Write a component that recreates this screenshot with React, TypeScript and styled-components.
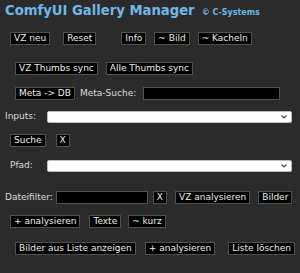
import React from "react";
import styled, { createGlobalStyle } from "styled-components";

const Global = createGlobalStyle`
  html, body { margin: 0; padding: 0; background: #2b2b2b; }
  body { font-family: "DejaVu Sans", Verdana, sans-serif; }
`;

const Panel = styled.div`
  width: 300px;
  height: 273px;
  box-sizing: border-box;
  padding-top: 3px;
  background: #2b2b2b;
  display: flex;
  flex-direction: column;
  overflow: hidden;
`;

const Title = styled.h1`
  margin: 0 0 0 5px;
  height: 16px;
  display: flex;
  align-items: baseline;
  gap: 7px;
  font: bold 13.2px/16px "DejaVu Sans", Verdana, sans-serif;
  color: #72b8e6;
  white-space: nowrap;
`;

const Copy = styled.span`
  font: bold 8px "DejaVu Sans", Verdana, sans-serif;
  color: #72b8e6;
`;

const Row = styled.div<{ $top: number; $left: number }>`
  display: flex;
  align-items: center;
  height: 13px;
  margin-top: ${(p) => p.$top}px;
  padding-left: ${(p) => p.$left}px;
  white-space: nowrap;
`;

const Button = styled.button<{ $ml?: number }>`
  box-sizing: border-box;
  height: 13px;
  margin: 0 0 0 ${(p) => p.$ml ?? 0}px;
  padding: 0 3px;
  background: #000;
  color: #eee;
  border: 1px solid #505050;
  border-radius: 0;
  font: 9px/11px "DejaVu Sans", Verdana, sans-serif;
  cursor: pointer;
`;

const Label = styled.span<{ $ml?: number; $w?: number }>`
  margin-left: ${(p) => p.$ml ?? 0}px;
  ${(p) => (p.$w ? `width: ${p.$w}px;` : "")}
  flex: none;
  font: 9px/11px "DejaVu Sans", Verdana, sans-serif;
  color: #ddd;
`;

const TextInput = styled.input<{ $ml?: number; $w: number }>`
  box-sizing: border-box;
  width: ${(p) => p.$w}px;
  height: 13px;
  margin: 0 0 0 ${(p) => p.$ml ?? 0}px;
  padding: 0 2px;
  background: #000;
  color: #eee;
  border: 1px solid #555;
  font: 9px "DejaVu Sans", Verdana, sans-serif;
  outline: none;
`;

const SelectBox = styled.div<{ $ml?: number }>`
  position: relative;
  box-sizing: border-box;
  width: 245px;
  height: 12px;
  margin-left: ${(p) => p.$ml ?? 0}px;
  background: #fff;
  border: 1px solid #bbb;
  border-radius: 2px;
`;

const Chevron = styled.svg`
  position: absolute;
  right: 4px;
  top: 3px;
`;

function Select({ ml }: { ml?: number }) {
  return (
    <SelectBox $ml={ml}>
      <Chevron width="6" height="4" viewBox="0 0 6 4">
        <path d="M0.5 0.5 L3 3 L5.5 0.5" fill="none" stroke="#444" strokeWidth="1.2" />
      </Chevron>
    </SelectBox>
  );
}

export default function App() {
  return (
    <>
      <Global />
      <Panel>
        <Title>
          ComfyUI Gallery Manager <Copy>© C-Systems</Copy>
        </Title>
        <Row $top={13} $left={10}>
          <Button>VZ neu</Button>
          <Button $ml={13}>Reset</Button>
          <Button $ml={25}>Info</Button>
          <Button $ml={8}>~ Bild</Button>
          <Button $ml={8}>~ Kacheln</Button>
        </Row>
        <Row $top={17} $left={15}>
          <Button>VZ Thumbs sync</Button>
          <Button $ml={8}>Alle Thumbs sync</Button>
        </Row>
        <Row $top={12} $left={15}>
          <Button>Meta -&gt; DB</Button>
          <Label $ml={5}>Meta-Suche:</Label>
          <TextInput $ml={7} $w={137} />
        </Row>
        <Row $top={10} $left={5}>
          <Label $w={42}>Inputs:</Label>
          <Select />
        </Row>
        <Row $top={11} $left={10}>
          <Button>Suche</Button>
          <Button $ml={10}>X</Button>
        </Row>
        <Row $top={12} $left={10}>
          <Label $w={37}>Pfad:</Label>
          <Select />
        </Row>
        <Row $top={19} $left={5}>
          <Label>Dateifilter:</Label>
          <TextInput $ml={3} $w={92} />
          <Button $ml={5}>X</Button>
          <Button $ml={8}>VZ analysieren</Button>
          <Button $ml={8}>Bilder</Button>
        </Row>
        <Row $top={11} $left={10}>
          <Button>+ analysieren</Button>
          <Button $ml={9}>Texte</Button>
          <Button $ml={7}>~ kurz</Button>
        </Row>
        <Row $top={14} $left={15}>
          <Button>Bilder aus Liste anzeigen</Button>
          <Button $ml={9}>+ analysieren</Button>
          <Button $ml={13}>Liste löschen</Button>
        </Row>
      </Panel>
    </>
  );
}
